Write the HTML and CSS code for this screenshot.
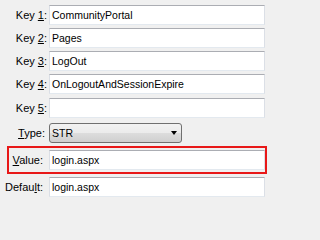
FILE: index.html
```html
<!DOCTYPE html>
<html>
<head>
<meta charset="utf-8">
<link rel="stylesheet" href="styles.css">
</head>
<body>
<div class="form">
  <div class="row key"><span class="label">Key <u>1</u>:</span><div class="field">CommunityPortal</div></div>
  <div class="row key"><span class="label">Key <u>2</u>:</span><div class="field">Pages</div></div>
  <div class="row key"><span class="label">Key <u>3</u>:</span><div class="field">LogOut</div></div>
  <div class="row key"><span class="label">Key <u>4</u>:</span><div class="field">OnLogoutAndSessionExpire</div></div>
  <div class="row key"><span class="label">Key <u>5</u>:</span><div class="field"></div></div>
  <div class="row type"><span class="label"><u>T</u>ype:</span><div class="select"><span>STR</span><span class="arrow"></span></div></div>
  <div class="highlight">
    <div class="row value"><span class="label"><u>V</u>alue:</span><div class="field">login.aspx</div></div>
  </div>
  <div class="row default"><span class="label">Defau<u>l</u>t:</span><div class="field">login.aspx</div></div>
</div>
</body>
</html>
```

FILE: styles.css
```css
html, body {
  margin: 0;
  padding: 0;
  background: #f0f0f0;
}
body {
  font-family: "Liberation Sans", Arial, sans-serif;
  font-size: 11px;
  color: #000;
}
.form {
  padding-top: 5px;
  display: flex;
  flex-direction: column;
}
.row {
  display: flex;
  align-items: center;
  height: 20px;
  margin-bottom: 3px;
}
.label {
  flex: none;
  text-align: right;
  box-sizing: border-box;
}
.key .label { width: 49px; padding-right: 2px; }
.type .label { width: 49px; padding-right: 4px; }
.default .label { width: 49px; padding-right: 6px; }
.value .label { width: 40px; padding-right: 6px; }
.key:nth-child(4) { margin-bottom: 4px; }
.field {
  box-sizing: border-box;
  width: 216px;
  height: 20px;
  line-height: 18px;
  padding-left: 2px;
  font-size: 10.5px;
  background: #fff;
  border: 1px solid #dbdfe6;
  border-top-color: #abadb3;
  border-bottom-color: #e3e9ef;
  white-space: nowrap;
  overflow: hidden;
}
.type { margin-top: 2px; }
.select {
  box-sizing: border-box;
  width: 133px;
  height: 20px;
  line-height: 18px;
  padding-left: 2px;
  font-size: 10.5px;
  border: 1px solid #707070;
  border-radius: 3px;
  background: linear-gradient(#f2f2f2 0%, #ebebeb 50%, #dddddd 50%, #cfcfcf 100%);
  display: flex;
  align-items: center;
  justify-content: space-between;
}
.arrow {
  width: 0;
  height: 0;
  border-left: 3.5px solid transparent;
  border-right: 3.5px solid transparent;
  border-top: 4px solid #000;
  margin-right: 4px;
}
.highlight {
  margin-left: 7px;
  width: 260px;
  box-sizing: border-box;
  border: 2px solid #e81818;
  padding: 2px 0 2px 0;
  margin-bottom: 3px;
}
.highlight .row { margin-bottom: 0; }
```
